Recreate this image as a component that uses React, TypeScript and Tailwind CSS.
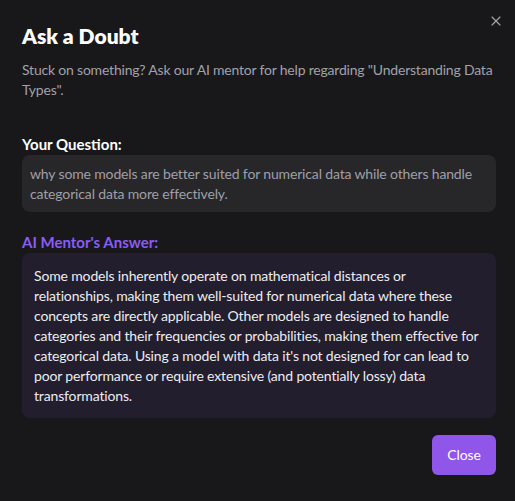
import { X } from "lucide-react";

export default function App() {
  return (
    <div
      className="relative min-h-screen w-full bg-[#18181b] pl-[22px] pr-[19px] pt-[22px] pb-6 tracking-[-0.15px]"
      style={{ fontFamily: 'Lato, "Liberation Sans", Arial, sans-serif' }}
    >
      <button className="absolute right-[11px] top-[13px] text-[#a1a1aa]">
        <X size={16} strokeWidth={1.75} />
      </button>

      <h2 className="text-[21px] font-extrabold leading-7 tracking-normal text-white">Ask a Doubt</h2>
      <p className="mt-2.5 text-sm leading-5 tracking-[-0.2px] text-[#a1a1aa]">
        Stuck on something? Ask our AI mentor for help regarding "Understanding Data Types".
      </p>

      <div className="mt-[34px]">
        <div className="text-[15px] font-bold leading-5 tracking-normal text-white">Your Question:</div>
        <div className="mt-px rounded-lg bg-[#27272a] px-2 pt-[9px] pb-2 text-sm leading-5 text-[#9f9fa6]">
          why some models are better suited for numerical data while others handle categorical data more effectively.
        </div>
      </div>

      <div className="mt-5">
        <div className="text-[15px] font-bold leading-5 tracking-normal text-[#8b5cf6]">AI Mentor's Answer:</div>
        <div className="mt-px rounded-lg bg-[#221e2e] px-3 pt-[13px] pb-3 text-sm leading-5 text-[#ececef]">
          Some models inherently operate on mathematical distances or relationships, making them well-suited for
          numerical data where these concepts are directly applicable. Other models are designed to handle categories
          and their frequencies or probabilities, making them effective for categorical data. Using a model with data
          it's not designed for can lead to poor performance or require extensive (and potentially lossy) data
          transformations.
        </div>
      </div>

      <div className="mt-[17px] flex justify-end">
        <button className="h-10 w-16 rounded-md bg-[#8f56e9] text-sm text-white">Close</button>
      </div>
    </div>
  );
}
